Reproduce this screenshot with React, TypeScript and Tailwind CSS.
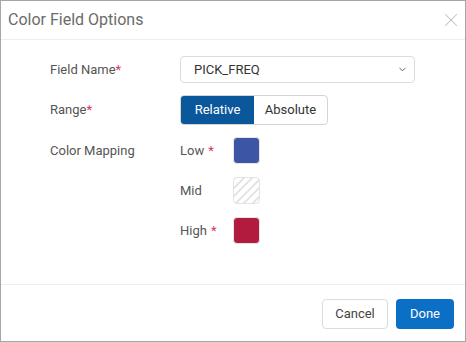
import { X, ChevronDown } from "lucide-react";

function Req({ space }: { space?: boolean }) {
  return <span className={`text-[#e0335a] ${space ? "ml-1" : ""}`}>*</span>;
}

export default function App() {
  const rows = [
    { name: "Low", req: true, swatch: "bg-[#3c56a5]" },
    { name: "Mid", req: false, swatch: "" },
    { name: "High", req: true, swatch: "bg-[#b21a3e]" },
  ];

  return (
    <div
      className="w-[466px] h-[342px] border border-[#a6a6a6] bg-white flex flex-col text-[13px] text-[#555]"
      style={{ fontFamily: "Roboto, 'Liberation Sans', sans-serif" }}
    >
      {/* Header */}
      <div className="h-[39px] flex items-center justify-between pl-[7px] pr-[3px] border-b border-[#eeeeee] shrink-0">
        <h1 className="text-[16px] text-[#6b6b6b]">Color Field Options</h1>
        <X className="w-[22px] h-[22px] text-[#bdbdbd]" strokeWidth={1.1} />
      </div>

      {/* Body */}
      <div className="flex-1 pl-[49px] pt-[16px] flex flex-col gap-[12px]">
        <div className="flex items-center h-[27px]">
          <div className="w-[130px]">
            Field Name<Req />
          </div>
          <div className="w-[235px] h-[27px] border border-[#dcdcdc] rounded-[4px] flex items-center justify-between pl-[13px] pr-[6px] text-[#333]">
            <span>PICK_FREQ</span>
            <ChevronDown className="w-[11px] h-[11px] text-[#555]" strokeWidth={2} />
          </div>
        </div>

        <div className="flex items-center h-[30px]">
          <div className="w-[130px]">
            Range<Req />
          </div>
          <div className="flex h-[30px] w-[148px] border border-[#d4d4d4] rounded-[4px] overflow-hidden">
            <div className="w-[73px] bg-[#0b579b] text-white flex items-center justify-center">
              Relative
            </div>
            <div className="flex-1 text-[#333] flex items-center justify-center">
              Absolute
            </div>
          </div>
        </div>

        <div className="flex">
          <div className="w-[130px] h-[27px] flex items-center">Color Mapping</div>
          <div className="flex flex-col gap-[13px]">
            {rows.map((r) => (
              <div key={r.name} className="flex items-center h-[27px]">
                <div className="w-[53px]">
                  {r.name}
                  {r.req && <Req space />}
                </div>
                {r.swatch ? (
                  <div className={`w-[27px] h-[27px] rounded-[4px] border border-[#e6e6e6] ${r.swatch}`} />
                ) : (
                  <div className="w-[27px] h-[27px] rounded-[4px] border border-[#e3e3e3] bg-[repeating-linear-gradient(135deg,#e6e6e6_0px,#e6e6e6_2px,#ffffff_2px,#ffffff_6px)]" />
                )}
              </div>
            ))}
          </div>
        </div>
      </div>

      {/* Footer */}
      <div className="h-[57px] border-t border-[#eeeeee] flex justify-end gap-[8px] pt-[14px] pr-[11px] shrink-0">
        <button className="w-[66px] h-[30px] border border-[#dcdcdc] rounded-[4px] text-[#444]">
          Cancel
        </button>
        <button className="w-[58px] h-[30px] rounded-[4px] bg-[#0b6fc5] text-white">
          Done
        </button>
      </div>
    </div>
  );
}
